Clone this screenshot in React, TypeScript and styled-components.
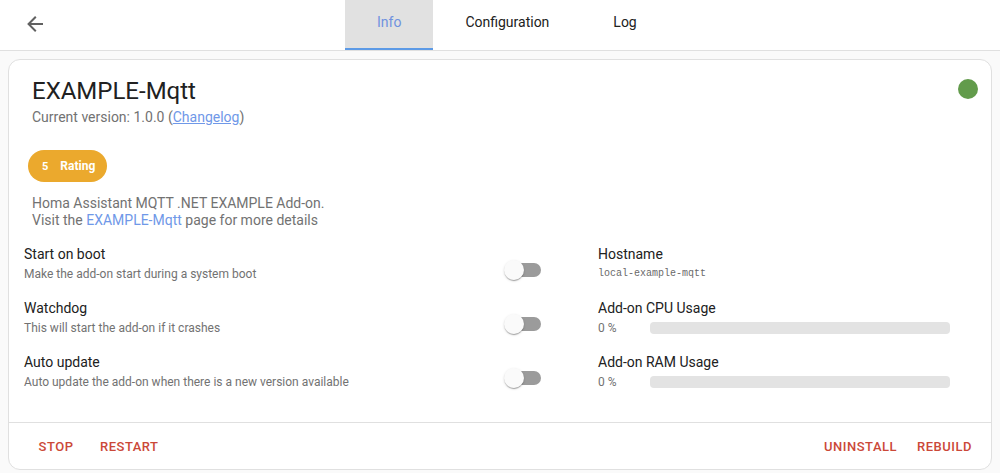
import React from "react";
import styled, { createGlobalStyle } from "styled-components";

const Global = createGlobalStyle`
  html, body { margin: 0; padding: 0; }
  body {
    background: #fafafa;
    font-family: Roboto, "Noto Sans", "Liberation Sans", sans-serif;
    color: #212121;
    -webkit-font-smoothing: antialiased;
  }
  * { box-sizing: border-box; }
`;

const Page = styled.div`
  width: 1000px;
  height: 473px;
  display: flex;
  flex-direction: column;
  background: #fafafa;
  overflow: hidden;
`;

const Header = styled.header`
  height: 51px;
  flex: none;
  background: #fff;
  border-bottom: 1px solid #e0e0e0;
  display: flex;
  align-items: stretch;
`;

const BackButton = styled.button`
  width: 48px;
  height: 48px;
  margin-left: 11px;
  border: none;
  background: transparent;
  padding: 0;
  display: flex;
  align-items: center;
  justify-content: center;
  color: #616161;
  cursor: pointer;
`;

const Tabs = styled.nav`
  display: flex;
  margin-left: 286px;
  height: 50px;
`;

const Tab = styled.div<{ $active?: boolean }>`
  height: 50px;
  padding: 0 32px;
  display: flex;
  align-items: center;
  font-size: 14px;
  padding-bottom: 6px;
  color: ${(p) => (p.$active ? "#6f92df" : "#212121")};
  background: ${(p) => (p.$active ? "#e1e1e1" : "transparent")};
  border-bottom: 2px solid ${(p) => (p.$active ? "#5c9ae6" : "transparent")};
  padding-top: 2px;
`;

const Content = styled.main`
  flex: 1;
  padding: 8px 8px 4px 8px;
`;

const Card = styled.section`
  background: #fff;
  border: 1px solid #e0e0e0;
  border-radius: 12px;
  height: 411px;
  display: flex;
  flex-direction: column;
`;

const CardBody = styled.div`
  flex: 1;
  padding: 15px 15px 0 15px;
  position: relative;
`;

const Intro = styled.div`
  padding: 0 8px;
`;

const Title = styled.h1`
  margin: 0;
  font-size: 24px;
  font-weight: 400;
  line-height: 32px;
  color: #212121;
`;

const Version = styled.div`
  font-size: 14px;
  line-height: 20px;
  color: #727272;
`;

const Link = styled.a<{ $underline?: boolean }>`
  color: #6f98e8;
  text-decoration: ${(p) => (p.$underline ? "underline" : "none")};
`;

const StatusDot = styled.div`
  position: absolute;
  top: 19px;
  right: 13px;
  width: 20px;
  height: 20px;
  border-radius: 50%;
  background: #629b4b;
`;

const Badge = styled.div`
  margin-top: 23px;
  margin-left: -4px;
  display: inline-flex;
  align-items: center;
  height: 32px;
  padding: 0 12px 0 14px;
  border-radius: 16px;
  background: #eba92d;
  color: #fff;
  font-size: 12px;
  font-weight: 700;
  gap: 12px;
`;

const BadgeValue = styled.span`
  font-size: 11px;
`;

const Description = styled.p`
  margin: 13px 0 0;
  font-size: 14px;
  line-height: 17px;
  color: #727272;
`;

const Grid = styled.div`
  margin-top: 10px;
  display: grid;
  grid-template-columns: 517px 1fr;
  column-gap: 57px;
`;

const Column = styled.div`
  display: flex;
  flex-direction: column;
`;

const Row = styled.div`
  height: 54px;
  display: flex;
  align-items: center;
  justify-content: space-between;
  padding-bottom: 4px;
`;

const RowText = styled.div`
  display: flex;
  flex-direction: column;
`;

const RowTitle = styled.div`
  font-size: 14px;
  line-height: 20px;
  color: #212121;
`;

const RowDesc = styled.div`
  font-size: 12px;
  line-height: 20px;
  color: #727272;
`;

const Mono = styled.div`
  font-family: "Liberation Mono", "DejaVu Sans Mono", monospace;
  font-size: 10px;
  line-height: 20px;
  color: #6a6a6a;
`;

const Switch = styled.div`
  position: relative;
  width: 37px;
  height: 20px;
  margin-top: 12px;
`;

const Track = styled.div`
  position: absolute;
  left: 3px;
  top: 3px;
  width: 34px;
  height: 14px;
  border-radius: 7px;
  background: #9b9b9b;
`;

const Thumb = styled.div`
  position: absolute;
  left: 0;
  top: 0;
  width: 20px;
  height: 20px;
  border-radius: 50%;
  background: #fafafa;
  box-shadow: 0 2px 1px -1px rgba(0, 0, 0, 0.2), 0 1px 1px 0 rgba(0, 0, 0, 0.14),
    0 1px 3px 0 rgba(0, 0, 0, 0.12);
`;

const UsageRow = styled.div`
  display: flex;
  align-items: center;
`;

const UsageValue = styled.div`
  width: 52px;
  font-size: 12px;
  line-height: 20px;
  color: #727272;
`;

const Bar = styled.div`
  width: 300px;
  height: 12px;
  border-radius: 4px;
  background: #e3e3e3;
  overflow: hidden;
`;

const BarFill = styled.div`
  height: 100%;
  background: #03a9f4;
`;

const Footer = styled.footer`
  height: 47px;
  border-top: 1px solid #e0e0e0;
  display: flex;
  align-items: center;
  justify-content: space-between;
  padding: 1px 11px 0 15px;
`;

const ButtonGroup = styled.div`
  display: flex;
  gap: 4px;
`;

const ActionButton = styled.button`
  min-width: 64px;
  height: 36px;
  padding: 0 8px;
  border: none;
  background: transparent;
  font-family: Roboto, "Liberation Sans", sans-serif;
  font-size: 13px;
  font-weight: 500;
  letter-spacing: 0.5px;
  color: #cb4838;
  text-transform: uppercase;
  cursor: pointer;
`;

const options = [
  { title: "Start on boot", desc: "Make the add-on start during a system boot" },
  { title: "Watchdog", desc: "This will start the add-on if it crashes" },
  { title: "Auto update", desc: "Auto update the add-on when there is a new version available" },
];

const usages = [
  { title: "Add-on CPU Usage", value: 0 },
  { title: "Add-on RAM Usage", value: 0 },
];

export default function App() {
  return (
    <>
      <Global />
      <Page>
        <Header>
          <BackButton aria-label="Back">
            <svg width="24" height="24" viewBox="0 0 24 24">
              <path
                fill="currentColor"
                d="M20,11V13H8L13.5,18.5L12.08,19.92L4.16,12L12.08,4.08L13.5,5.5L8,11H20Z"
              />
            </svg>
          </BackButton>
          <Tabs>
            <Tab $active>Info</Tab>
            <Tab>Configuration</Tab>
            <Tab>Log</Tab>
          </Tabs>
        </Header>
        <Content>
          <Card>
            <CardBody>
              <StatusDot />
              <Intro>
                <Title>EXAMPLE-Mqtt</Title>
                <Version>
                  Current version: 1.0.0 (<Link $underline href="#">Changelog</Link>)
                </Version>
                <Badge>
                  <BadgeValue>5</BadgeValue>
                  <span>Rating</span>
                </Badge>
                <Description>
                  Homa Assistant MQTT .NET EXAMPLE Add-on.
                  <br />
                  Visit the <Link href="#">EXAMPLE-Mqtt</Link> page for more details
                </Description>
              </Intro>
              <Grid>
                <Column>
                  {options.map((o) => (
                    <Row key={o.title}>
                      <RowText>
                        <RowTitle>{o.title}</RowTitle>
                        <RowDesc>{o.desc}</RowDesc>
                      </RowText>
                      <Switch>
                        <Track />
                        <Thumb />
                      </Switch>
                    </Row>
                  ))}
                </Column>
                <Column>
                  <Row>
                    <RowText>
                      <RowTitle>Hostname</RowTitle>
                      <Mono>local-example-mqtt</Mono>
                    </RowText>
                  </Row>
                  {usages.map((u) => (
                    <Row key={u.title}>
                      <RowText>
                        <RowTitle>{u.title}</RowTitle>
                        <UsageRow>
                          <UsageValue>{u.value} %</UsageValue>
                          <Bar>
                            <BarFill style={{ width: `${u.value}%` }} />
                          </Bar>
                        </UsageRow>
                      </RowText>
                    </Row>
                  ))}
                </Column>
              </Grid>
            </CardBody>
            <Footer>
              <ButtonGroup>
                <ActionButton>Stop</ActionButton>
                <ActionButton>Restart</ActionButton>
              </ButtonGroup>
              <ButtonGroup>
                <ActionButton>Uninstall</ActionButton>
                <ActionButton>Rebuild</ActionButton>
              </ButtonGroup>
            </Footer>
          </Card>
        </Content>
      </Page>
    </>
  );
}
